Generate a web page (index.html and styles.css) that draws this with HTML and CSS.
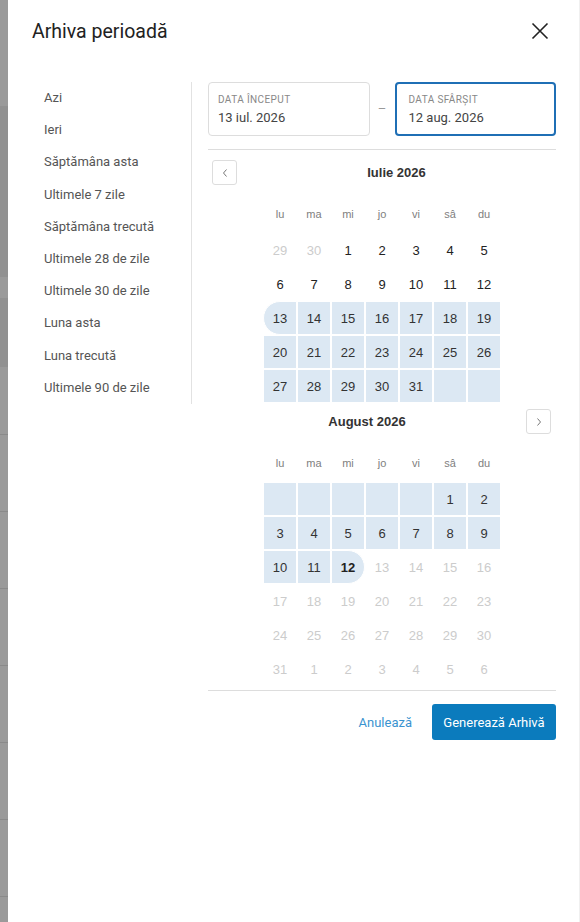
FILE: index.html
```html
<!DOCTYPE html>
<html lang="ro">
<head>
    <meta charset="UTF-8">
    <meta name="viewport" content="width=device-width, initial-scale=1.0">
    <title>Arhiva perioadă</title>
<link rel="stylesheet" href="styles.css">
</head>

<body>
    <div class="page">
        <div class="backdrop">
            <div class="bd_row light" style="height:106px"></div>
            <div class="bd_row" style="height:171px"></div>
            <div class="bd_row light" style="height:21px"></div>
            <div class="bd_row" style="height:69px"></div>
            <div class="bd_row light" style="height:67px"></div>
            <div class="bd_row light line" style="height:77px"></div>
            <div class="bd_row light line" style="height:77px"></div>
            <div class="bd_row light line" style="height:77px"></div>
            <div class="bd_row light line" style="height:77px"></div>
            <div class="bd_row light line" style="height:77px"></div>
            <div class="bd_row light line" style="height:77px"></div>
            <div class="bd_row light line" style="height:26px"></div>
        </div>

        <div class="modal">
            <div class="modal_header">
                <h1>Arhiva perioadă</h1>
                <button class="close_btn">
                    <svg width="18" height="18" viewBox="0 0 18 18">
                        <path d="M1.5 1.5 L16.5 16.5 M16.5 1.5 L1.5 16.5" stroke="#222" stroke-width="1.6" fill="none"/>
                    </svg>
                </button>
            </div>

            <div class="modal_body">
                <ul class="presets">
                    <li>Azi</li>
                    <li>Ieri</li>
                    <li>Săptămâna asta</li>
                    <li>Ultimele 7 zile</li>
                    <li>Săptămâna trecută</li>
                    <li>Ultimele 28 de zile</li>
                    <li>Ultimele 30 de zile</li>
                    <li>Luna asta</li>
                    <li>Luna trecută</li>
                    <li>Ultimele 90 de zile</li>
                </ul>

                <div class="picker">
                    <div class="inputs">
                        <div class="date_box">
                            <div class="date_label">Data început</div>
                            <div class="date_value">13 iul. 2026</div>
                        </div>
                        <div class="dash">–</div>
                        <div class="date_box active">
                            <div class="date_label">Data sfârșit</div>
                            <div class="date_value">12 aug. 2026</div>
                        </div>
                    </div>

                    <div class="calendar">
                        <div class="month">
                            <div class="month_head">
                                <button class="nav_btn prev">
                                    <svg width="8" height="10" viewBox="0 0 8 10"><path d="M5.5 1.5 L2.5 5 L5.5 8.5" stroke="#777" stroke-width="1" fill="none"/></svg>
                                </button>
                                <div class="month_title">Iulie 2026</div>
                            </div>
                            <div class="weekdays">
                                <span>lu</span><span>ma</span><span>mi</span><span>jo</span><span>vi</span><span>sâ</span><span>du</span>
                            </div>
                            <div class="days" id="july"></div>
                        </div>

                        <div class="month">
                            <div class="month_head">
                                <div class="month_title">August 2026</div>
                                <button class="nav_btn next">
                                    <svg width="8" height="10" viewBox="0 0 8 10"><path d="M2.5 1.5 L5.5 5 L2.5 8.5" stroke="#777" stroke-width="1" fill="none"/></svg>
                                </button>
                            </div>
                            <div class="weekdays">
                                <span>lu</span><span>ma</span><span>mi</span><span>jo</span><span>vi</span><span>sâ</span><span>du</span>
                            </div>
                            <div class="days" id="august"></div>
                        </div>
                    </div>

                    <div class="footer">
                        <button class="cancel_btn">Anulează</button>
                        <button class="submit_btn">Generează Arhivă</button>
                    </div>
                </div>
            </div>
        </div>
    </div>

<script>
    // fiecare zi: [text, clase]
    function renderDays(id, list) {
        var box = document.getElementById(id);
        list.forEach(function(d) {
            box.innerHTML += '<div class="day ' + d[1] + '">' + d[0] + '</div>';
        });
    }

    var july = [['29', 'muted'], ['30', 'muted']];
    for (var i = 1; i <= 12; i++) july.push([i, '']);
    july.push([13, 'range start']);
    for (var i = 14; i <= 31; i++) july.push([i, 'range']);
    july.push(['', 'range'], ['', 'range']);

    var august = [];
    for (var i = 0; i < 5; i++) august.push(['', 'range']);
    for (var i = 1; i <= 11; i++) august.push([i, 'range']);
    august.push([12, 'range end']);
    for (var i = 13; i <= 31; i++) august.push([i, 'muted']);
    for (var i = 1; i <= 6; i++) august.push([i, 'muted']);

    renderDays('july', july);
    renderDays('august', august);
</script>
</body>
</html>
```

FILE: styles.css
```css
body{
    margin:0;
    font-family: Roboto, "Liberation Sans", sans-serif;
}
.page{
    display: flex;
    width: 580px;
    height: 922px;
    overflow: hidden;
}
.backdrop{
    width: 8px;
    display: flex;
    flex-direction: column;
    background-color: #999;
}
.bd_row{
    background-color: #919191;
    box-sizing: border-box;
}
.bd_row.light{
    background-color: #9a9a9a;
}
.bd_row.line{
    border-top: 1px solid #8a8a8a;
}
.modal{
    flex: 1;
    background-color: #fff;
    border-right: 1px solid #f0f0f0;
}
.modal_header{
    display: flex;
    align-items: center;
    justify-content: space-between;
    height: 62px;
    padding: 0 30px 0 24px;
}
.modal_header h1{
    margin: 0;
    font-size: 19.5px;
    font-weight: normal;
    color: #222;
}
.close_btn{
    border: none;
    background: none;
    padding: 0;
    width: 18px;
    height: 18px;
    cursor: pointer;
}
.modal_body{
    display: flex;
    padding-top: 20px;
}
.presets{
    list-style: none;
    margin: 0;
    padding: 0 0 0 36px;
    width: 147px;
    border-right: 1px solid #e2e2e2;
    align-self: flex-start;
}
.presets li{
    line-height: 32.2px;
    font-size: 13px;
    color: #555;
}
.picker{
    flex: 1;
    padding: 0 23px 0 16px;
}
.inputs{
    display: grid;
    grid-template-columns: 1fr 25px 1fr;
    padding-bottom: 13px;
    border-bottom: 1px solid #ddd;
}
.date_box{
    height: 54px;
    box-sizing: border-box;
    border: 1px solid #ddd;
    border-radius: 4px;
    padding: 10px 9px 0;
}
.date_box.active{
    border: 2px solid #1f6fb5;
    padding: 9px 12px 0;
}
.date_label{
    font-size: 10px;
    line-height: 14px;
    text-transform: uppercase;
    letter-spacing: 0.4px;
    color: #888;
}
.date_value{
    margin-top: 2px;
    font-size: 13px;
    line-height: 18px;
    color: #444;
}
.dash{
    text-align: center;
    line-height: 54px;
    font-size: 13px;
    color: #999;
}
.calendar{
    padding-top: 10px;
}
.month_head{
    height: 25px;
    display: flex;
    align-items: center;
}
.month_title{
    flex: 1;
    text-align: center;
    font-family: "Liberation Sans", Arial, sans-serif;
    font-weight: bold;
    font-size: 13px;
    color: #333;
}
.nav_btn{
    width: 25px;
    height: 25px;
    padding: 0;
    border: 1px solid #ddd;
    border-radius: 3px;
    background: #fff;
    display: flex;
    align-items: center;
    justify-content: center;
}
.nav_btn.prev{
    margin-left: 4px;
}
.nav_btn.next{
    margin-right: 5px;
}
.month + .month{
    margin-top: 6px;
}
.weekdays{
    display: grid;
    grid-template-columns: repeat(7, 34px);
    justify-content: center;
    height: 30px;
    margin: 14px 0 4px;
    align-items: center;
    font-family: "Liberation Sans", Arial, sans-serif;
    font-size: 11px;
    color: #808080;
}
.weekdays span{
    text-align: center;
}
.days{
    display: grid;
    grid-template-columns: repeat(7, 34px);
    justify-content: center;
}
.day{
    height: 34px;
    box-sizing: border-box;
    border: 1px solid #fff;
    display: flex;
    align-items: center;
    justify-content: center;
    font-family: "Liberation Sans", Arial, sans-serif;
    font-size: 13px;
    color: #222;
}
.day.range{
    background-color: #dce8f3;
    color: #333;
}
.day.start{
    border-radius: 17px 0 0 17px;
}
.day.end{
    border-radius: 0 17px 17px 0;
    font-weight: bold;
    color: #222;
}
.day.muted{
    color: #ccc;
}
.footer{
    display: flex;
    justify-content: flex-end;
    align-items: center;
    margin-top: 4px;
    padding-top: 13px;
    border-top: 1px solid #ddd;
}
.cancel_btn{
    border: none;
    background: none;
    padding: 0;
    margin-right: 20px;
    font-family: Roboto, sans-serif;
    font-size: 13px;
    color: #3a93d0;
}
.submit_btn{
    border: none;
    border-radius: 3px;
    height: 36px;
    width: 124px;
    background-color: #0b7bbd;
    color: #fff;
    font-family: Roboto, sans-serif;
    font-size: 13px;
}
```
